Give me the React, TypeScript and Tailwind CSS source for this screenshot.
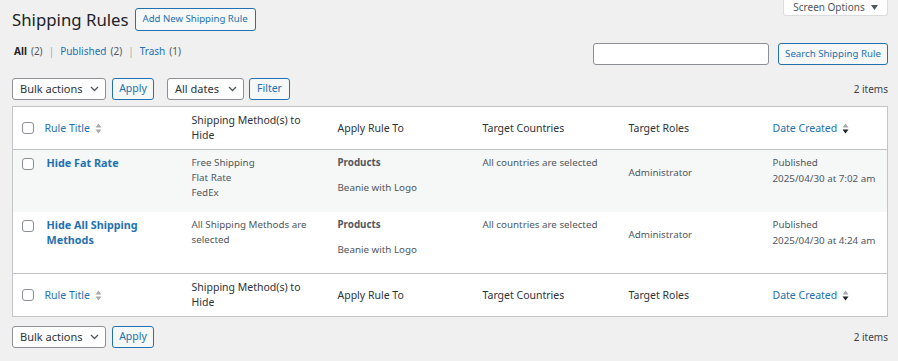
import type { ReactNode } from "react";

const font = { fontFamily: '"Noto Sans", "Open Sans", sans-serif' };

function Check() {
  return <span className="block w-[12px] h-[12px] rounded-[3px] border border-[#8c8f94] bg-white" />;
}

function SortIcon({ active }: { active?: boolean }) {
  return (
    <svg width="7" height="11" viewBox="0 0 7 11" className="ml-[5px] inline-block">
      <path d="M3.5 0.5 L6.5 4.5 H0.5 Z" fill="#a7aaad" />
      <path d="M3.5 10.5 L6.5 6.5 H0.5 Z" fill={active ? "#1d2327" : "#a7aaad"} />
    </svg>
  );
}

function Select({ label, width }: { label: string; width: string }) {
  return (
    <div className={`${width} h-[22px] flex items-center justify-between pl-[7px] pr-[6px] bg-white border border-[#8c8f94] rounded-[3px] text-[11px] text-[#2c3338]`}>
      <span>{label}</span>
      <svg width="9" height="6" viewBox="0 0 9 6">
        <path d="M1 1 L4.5 4.5 L8 1" stroke="#50575e" strokeWidth="1.3" fill="none" />
      </svg>
    </div>
  );
}

function Btn({
  children,
  className = "",
  size = "h-[22px] text-[10.5px]",
}: {
  children: ReactNode;
  className?: string;
  size?: string;
}) {
  return (
    <button className={`${size} whitespace-nowrap border border-[#2271b1] bg-[#f6f7f7] rounded-[3px] text-[#2271b1] ${className}`}>
      {children}
    </button>
  );
}

function HeadRow({ top }: { top?: boolean }) {
  const cls = `h-[43px] align-middle px-[6px] text-left font-normal text-[10.5px] leading-[15px] text-[#2c3338] ${
    top ? "border-b" : "border-t"
  } border-[#c3c4c7]`;
  return (
    <tr>
      <th className={`${cls} pl-[9px] pr-0`}>
        <Check />
      </th>
      <th className={cls}>
        <span className="text-[#2271b1]">Rule Title</span>
        <SortIcon />
      </th>
      <th className={cls}>
        <div className="max-w-[120px]">Shipping Method(s) to Hide</div>
      </th>
      <th className={cls}>Apply Rule To</th>
      <th className={cls}>Target Countries</th>
      <th className={cls}>Target Roles</th>
      <th className={cls}>
        <span className="text-[#2271b1]">Date Created</span>
        <SortIcon active />
      </th>
    </tr>
  );
}

type Rule = { title: string; methods: string[]; date: string };

const rules: Rule[] = [
  { title: "Hide Fat Rate", methods: ["Free Shipping", "Flat Rate", "FedEx"], date: "2025/04/30 at 7:02 am" },
  { title: "Hide All Shipping Methods", methods: ["All Shipping Methods are selected"], date: "2025/04/30 at 4:24 am" },
];

export default function App() {
  const td = "align-top px-[6px] pt-[5px] text-[9.8px] leading-[15px] text-[#50575e]";
  return (
    <div style={font} className="bg-[#f0f0f1] min-h-[361px] w-[898px] pl-[12px] pr-[10px] text-[#3c434a]">
      <div className="flex items-start justify-between">
        <div className="flex items-center gap-[6px] pt-[8px]">
          <h1 className="text-[16.8px] leading-[23px] text-[#1d2327]">Shipping Rules</h1>
          <Btn size="h-[23px] text-[9.6px]" className="w-[121px]">
            Add New Shipping Rule
          </Btn>
        </div>
        <div className="h-[16px] w-[105px] flex items-center justify-center gap-[6px] bg-white border border-t-0 border-[#dcdcde] rounded-b-[3px] text-[10px] text-[#50575e]">
          <span>Screen Options</span>
          <svg width="7" height="5" viewBox="0 0 7 5">
            <path d="M0 0 H7 L3.5 5 Z" fill="#50575e" />
          </svg>
        </div>
      </div>

      <div className="flex items-start justify-between mt-[12px]">
        <div className="pl-[2px] pt-[1px] text-[10px] leading-[14px] flex items-center gap-[4px]">
          <span className="font-bold text-[#1d2327]">All</span>
          <span className="text-[#50575e]">(2)</span>
          <span className="text-[#a7aaad] px-[2px]">|</span>
          <span className="text-[#2271b1]">Published</span>
          <span className="text-[#50575e]">(2)</span>
          <span className="text-[#a7aaad] px-[2px]">|</span>
          <span className="text-[#2271b1]">Trash</span>
          <span className="text-[#50575e]">(1)</span>
        </div>
        <div className="flex items-center gap-[9px]">
          <div className="w-[176px] h-[22px] bg-white border border-[#8c8f94] rounded-[3px]" />
          <Btn size="h-[22px] text-[9.7px]" className="w-[110px]">
            Search Shipping Rule
          </Btn>
        </div>
      </div>

      <div className="flex items-center justify-between mt-[13px]">
        <div className="flex items-center">
          <Select label="Bulk actions" width="w-[94px]" />
          <Btn className="ml-[6px] w-[42px]">Apply</Btn>
          <Select label="All dates" width="w-[77px] ml-[13px]" />
          <Btn className="ml-[5px] w-[41px]">Filter</Btn>
        </div>
        <span className="text-[10px] text-[#3c434a]">2 items</span>
      </div>

      <table className="mt-[6px] w-full table-fixed border border-[#c3c4c7] bg-white border-collapse">
        <colgroup>
          <col className="w-[26px]" />
          <col className="w-[147px]" />
          <col className="w-[146px]" />
          <col className="w-[145px]" />
          <col className="w-[146px]" />
          <col className="w-[144px]" />
          <col />
        </colgroup>
        <thead>
          <HeadRow top />
        </thead>
        <tbody>
          {rules.map((r, i) => (
            <tr key={r.title} className={`h-[62px] ${i % 2 === 0 ? "bg-[#f6f7f7]" : "bg-white"}`}>
              <td className="align-top pl-[9px] pt-[8px]">
                <Check />
              </td>
              <td className={`${td} pl-[8px]`}>
                <div className="max-w-[120px] font-bold text-[10.8px] text-[#2271b1]">{r.title}</div>
              </td>
              <td className={td}>
                {r.methods.map((m) => (
                  <div key={m} className="max-w-[125px]">
                    {m}
                  </div>
                ))}
              </td>
              <td className={`${td} text-[#2c3338]`}>
                <div className="font-bold">Products</div>
                <div className="mt-[10px]">Beanie with Logo</div>
              </td>
              <td className={td}>All countries are selected</td>
              <td className={`${td} text-[#2c3338]`}>
                <div className="mt-[10px]">Administrator</div>
              </td>
              <td className={td}>
                <div>Published</div>
                <div className="mt-[1px]">{r.date}</div>
              </td>
            </tr>
          ))}
        </tbody>
        <tfoot>
          <HeadRow />
        </tfoot>
      </table>

      <div className="flex items-center justify-between mt-[9px]">
        <div className="flex items-center">
          <Select label="Bulk actions" width="w-[94px]" />
          <Btn className="ml-[6px] w-[42px]">Apply</Btn>
        </div>
        <span className="text-[10px] text-[#3c434a]">2 items</span>
      </div>
    </div>
  );
}
